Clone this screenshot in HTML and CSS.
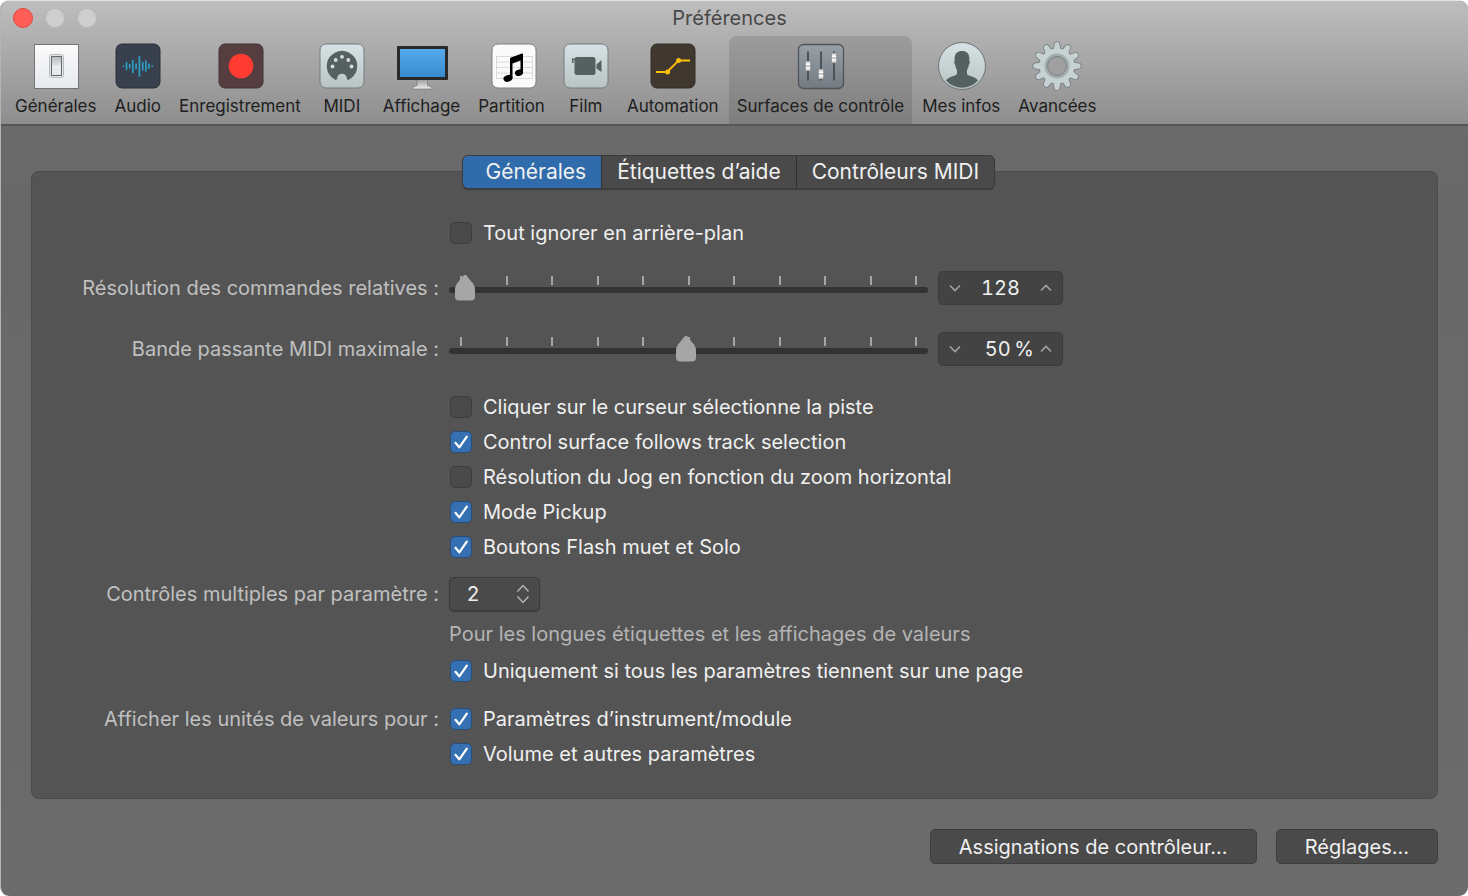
FILE: index.html
```html
<!DOCTYPE html>
<html lang="fr">
<head>
  <meta charset="UTF-8" />
  <meta name="viewport" content="width=device-width, initial-scale=1" />
  <title>Préférences</title>
  <link rel="stylesheet" href="styles.css">
</head>
<body>
  <div class="window">
    <header class="titlebar">
      <div class="title-row">
        <div class="lights">
          <button type="button" class="light close" aria-label="Fermer"></button>
          <button type="button" class="light" aria-label="Réduire" disabled></button>
          <button type="button" class="light" aria-label="Agrandir" disabled></button>
        </div>
        <h1>Préférences</h1>
      </div>

      <nav class="toolbar" aria-label="Catégories">
        <button type="button" class="tool">
          <svg width="50" height="50" viewBox="0 0 50 50" aria-hidden="true">
            <defs>
              <linearGradient id="white" x1="0" y1="0" x2="0" y2="1"><stop offset="0" stop-color="#fbfbfc"/><stop offset="1" stop-color="#e6e9ee"/></linearGradient>
              <linearGradient id="rocker" x1="0" y1="0" x2="0" y2="1"><stop offset="0" stop-color="#b9bcbf"/><stop offset=".45" stop-color="#dcdfe1"/><stop offset=".5" stop-color="#eceff1"/><stop offset="1" stop-color="#e2e8ea"/></linearGradient>
            </defs>
            <rect x="3.5" y="3.5" width="44" height="44" fill="url(#white)" stroke="#747474"/>
            <rect x="18.5" y="13.5" width="14" height="23" rx="2" fill="#e4e4e6" stroke="#bcbcbe"/>
            <rect x="20.5" y="15.5" width="10" height="19" fill="url(#rocker)" stroke="#666"/>
          </svg>
          <span>Générales</span>
        </button>
        <button type="button" class="tool">
          <svg width="50" height="50" viewBox="0 0 50 50" aria-hidden="true">
            <rect x="3" y="3" width="44" height="44" rx="6" fill="#37404c" stroke="#2b3038"/>
            <g stroke="#2f9fc4" stroke-width="1.7" stroke-linecap="round">
              <path d="M10.5 25v.2M13.5 21.5v7M16.700 23.500v3M19.800 19.500v12M23.100 23v4.500M26.400 15.500v19.500M29.700 21.500v7.500M32.900 20v10M36 23v4M39.200 25v.2"/>
            </g>
          </svg>
          <span>Audio</span>
        </button>
        <button type="button" class="tool">
          <svg width="50" height="50" viewBox="0 0 50 50" aria-hidden="true">
            <rect x="4" y="3" width="44" height="44" rx="6" fill="#563d40" stroke="#423436"/>
            <circle cx="26" cy="25" r="12.3" fill="#ff3b32"/>
          </svg>
          <span>Enregistrement</span>
        </button>
        <button type="button" class="tool">
          <svg width="50" height="50" viewBox="0 0 50 50" aria-hidden="true">
            <defs>
              <linearGradient id="pale" x1="0" y1="0" x2="0" y2="1"><stop offset="0" stop-color="#d6e2e4"/><stop offset="1" stop-color="#b9c3c4"/></linearGradient>
            </defs>
            <rect x="3" y="3" width="44" height="44" rx="6" fill="url(#pale)" stroke="#757b7c"/>
            <path d="M19 39.200A15.300 15.300 0 1 1 31 39.200L29.800 37.500A4.800 4.800 0 0 0 20.200 37.500Z" fill="#566060"/>
            <g fill="#d3dcdd"><circle cx="15.500" cy="25.500" r="1.900"/><circle cx="18.700" cy="19" r="1.900"/><circle cx="25" cy="15.800" r="1.900"/><circle cx="31.300" cy="19" r="1.900"/><circle cx="34.500" cy="25.500" r="1.900"/></g>
          </svg>
          <span>MIDI</span>
        </button>
        <button type="button" class="tool">
          <svg width="52" height="50" viewBox="0 0 52 50" aria-hidden="true">
            <defs>
              <linearGradient id="screen" x1="0" y1="0" x2="0" y2="1"><stop offset="0" stop-color="#56aaee"/><stop offset="1" stop-color="#358bcd"/></linearGradient>
              <linearGradient id="stand" x1="0" y1="0" x2="0" y2="1"><stop offset="0" stop-color="#999"/><stop offset="1" stop-color="#eee"/></linearGradient>
            </defs>
            <path d="M21 38h10.500v6.500l4.500 2V48H16.500v-1.500l4.500-2z" fill="url(#stand)" stroke="#777" stroke-width=".7"/>
            <rect x="1" y="5" width="51" height="34" rx="1" fill="#292929"/>
            <rect x="4" y="8" width="45" height="28" fill="url(#screen)"/>
          </svg>
          <span>Affichage</span>
        </button>
        <button type="button" class="tool">
          <svg width="50" height="50" viewBox="0 0 50 50" aria-hidden="true">
            <rect x="5" y="3" width="44" height="44" rx="6" fill="#fafafa" stroke="#808080"/>
            <path d="M9 15.500h37M9 21h37M9 26.500h37M9 32h37M9 37.500h37M9.500 15.500v22M45.500 15.500v22" stroke="#d2d2d4" stroke-width=".8"/>
            <path d="M23 18Q23 17 24 16.600L35 12.500Q36 12.200 36 13.200V31.500H33.500V19.500L25.500 22.500V37H23Z" fill="#000"/>
            <ellipse cx="21" cy="37.300" rx="4.600" ry="3.300" transform="rotate(-18 21 37.300)"/>
            <ellipse cx="32" cy="31.800" rx="4.200" ry="3.200" transform="rotate(-18 32 31.800)"/>
          </svg>
          <span>Partition</span>
        </button>
        <button type="button" class="tool">
          <svg width="50" height="50" viewBox="0 0 50 50" aria-hidden="true">
            <rect x="3" y="3" width="44" height="44" rx="6" fill="url(#pale)" stroke="#757b7c"/>
            <rect x="13.500" y="16" width="21" height="18" rx="2.500" fill="#566060"/>
            <path d="M14 18.200H11.700V22" stroke="#566060" stroke-width="1.600" fill="none"/>
            <path d="M35.500 23.500 40.500 19V31L35.500 27.500Z" fill="#566060"/>
          </svg>
          <span>Film</span>
        </button>
        <button type="button" class="tool">
          <svg width="50" height="50" viewBox="0 0 50 50" aria-hidden="true">
            <rect x="3" y="3" width="44" height="44" rx="6" fill="#40382f" stroke="#302c28"/>
            <g fill="#ffbf0d" stroke="#ffbf0d" stroke-width="1.8">
              <path d="M8 31H17.500M19.500 30.500 30.500 19.700M33 19.500H42" fill="none"/>
              <circle cx="19.600" cy="31" r="1.600"/><circle cx="30.600" cy="19.600" r="1.600"/>
            </g>
          </svg>
          <span>Automation</span>
        </button>
        <button type="button" class="tool selected" aria-current="page">
          <svg width="50" height="50" viewBox="0 0 50 50" aria-hidden="true">
            <defs>
              <linearGradient id="steel" x1="0" y1="0" x2="0" y2="1"><stop offset="0" stop-color="#98a1a7"/><stop offset="1" stop-color="#737a82"/></linearGradient>
              <linearGradient id="knob" x1="0" y1="0" x2="0" y2="1"><stop offset="0" stop-color="#bbb"/><stop offset=".35" stop-color="#fff"/><stop offset=".5" stop-color="#aaa"/><stop offset=".65" stop-color="#fff"/><stop offset="1" stop-color="#bbb"/></linearGradient>
            </defs>
            <rect x="3.500" y="3.500" width="45" height="44" rx="5" fill="url(#steel)" stroke="#50555b" stroke-width="1.300"/>
            <path d="M13 10.500v29M26 10.500v29M39 10.500v29" stroke="#484e53" stroke-width="1.800"/>
            <g fill="url(#knob)" stroke="#777" stroke-width=".4">
              <rect x="10.500" y="20" width="5" height="10" rx="1"/>
              <rect x="23.500" y="28" width="5" height="10" rx="1"/>
              <rect x="36.500" y="12" width="5" height="10" rx="1"/>
            </g>
          </svg>
          <span>Surfaces de contrôle</span>
        </button>
        <button type="button" class="tool">
          <svg width="50" height="50" viewBox="0 0 50 50" aria-hidden="true">
            <circle cx="26" cy="25" r="23.500" fill="url(#pale)" stroke="#6f7576"/>
            <path d="M10 39.500C12.500 36 18 35.500 21 33.300V29C20 27.500 19.500 26 19.300 24C18.200 23 17.900 20.500 18.700 19.500C18 13 21 10 26 10S34 13 33.300 19.500C34.100 20.500 33.800 23 32.700 24C32.500 26 32 27.500 31 29V33.300C34 35.500 39.500 36 42 39.500A21.500 21.500 0 0 1 10 39.500Z" fill="#556060"/>
          </svg>
          <span>Mes infos</span>
        </button>
        <button type="button" class="tool">
          <svg width="50" height="50" viewBox="0 0 50 50" aria-hidden="true">
            <defs>
              <path id="tooth" d="M21.500 9 22.800 2Q25 .2 27.200 2L28.500 9Z"/>
              <g id="gear">
                <circle cx="25" cy="25" r="17.500"/>
                <use href="#tooth"/><use href="#tooth" transform="rotate(30 25 25)"/><use href="#tooth" transform="rotate(60 25 25)"/><use href="#tooth" transform="rotate(90 25 25)"/>
                <use href="#tooth" transform="rotate(120 25 25)"/><use href="#tooth" transform="rotate(150 25 25)"/><use href="#tooth" transform="rotate(180 25 25)"/><use href="#tooth" transform="rotate(210 25 25)"/>
                <use href="#tooth" transform="rotate(240 25 25)"/><use href="#tooth" transform="rotate(270 25 25)"/><use href="#tooth" transform="rotate(300 25 25)"/><use href="#tooth" transform="rotate(330 25 25)"/>
              </g>
            </defs>
            <use href="#gear" fill="none" stroke="#777d7e" stroke-width="1.600"/>
            <use href="#gear" fill="#c6d1d3"/>
            <circle cx="25" cy="25" r="11" fill="#a0a0a0" stroke="#a3adaf" stroke-width="3"/>
            <circle cx="25" cy="25" r="9.500" fill="#a0a0a0" stroke="#7a8183"/>
          </svg>
          <span>Avancées</span>
        </button>
      </nav>
    </header>

    <main>
      <div class="tabs" role="tablist">
        <button type="button" class="tab active" role="tab" aria-selected="true">Générales</button>
        <button type="button" class="tab" role="tab" aria-selected="false">Étiquettes d’aide</button>
        <button type="button" class="tab" role="tab" aria-selected="false">Contrôleurs MIDI</button>
      </div>

      <form class="panel">
        <div class="row">
          <label class="check"><input type="checkbox"> Tout ignorer en arrière-plan</label>
        </div>

        <div class="sliders">
          <label for="resolution">Résolution des commandes relatives :</label>
          <div class="slider">
            <div class="ticks"><i></i><i></i><i></i><i></i><i></i><i></i><i></i><i></i><i></i><i></i><i></i></div>
            <input type="range" id="resolution" min="128" max="16384" value="128">
          </div>
          <div class="stepper">
            <button type="button" aria-label="Diminuer"><svg width="12" height="8" viewBox="0 0 12 8"><path d="M1 1.500 6 6.500 11 1.500"/></svg></button>
            <input type="text" value="128" aria-label="Résolution">
            <button type="button" aria-label="Augmenter"><svg width="12" height="8" viewBox="0 0 12 8"><path d="M1 6.500 6 1.500 11 6.500"/></svg></button>
          </div>

          <label for="bandwidth">Bande passante MIDI maximale :</label>
          <div class="slider">
            <div class="ticks"><i></i><i></i><i></i><i></i><i></i><i></i><i></i><i></i><i></i><i></i><i></i></div>
            <input type="range" id="bandwidth" min="0" max="100" value="50">
          </div>
          <div class="stepper percent">
            <button type="button" aria-label="Diminuer"><svg width="12" height="8" viewBox="0 0 12 8"><path d="M1 1.500 6 6.500 11 1.500"/></svg></button>
            <input type="text" value="50&#8201;%" aria-label="Bande passante">
            <button type="button" aria-label="Augmenter"><svg width="12" height="8" viewBox="0 0 12 8"><path d="M1 6.500 6 1.500 11 6.500"/></svg></button>
          </div>
        </div>

        <div class="row">
          <label class="check"><input type="checkbox"> Cliquer sur le curseur sélectionne la piste</label>
          <label class="check"><input type="checkbox" checked> Control surface follows track selection</label>
          <label class="check"><input type="checkbox"> Résolution du Jog en fonction du zoom horizontal</label>
          <label class="check"><input type="checkbox" checked> Mode Pickup</label>
          <label class="check"><input type="checkbox" checked> Boutons Flash muet et Solo</label>
        </div>

        <div class="row">
          <label class="row-label" for="multiple">Contrôles multiples par paramètre :</label>
          <select id="multiple">
            <option>1</option>
            <option selected>2</option>
            <option>3</option>
            <option>4</option>
          </select>
          <p class="hint">Pour les longues étiquettes et les affichages de valeurs</p>
          <label class="check"><input type="checkbox" checked> Uniquement si tous les paramètres tiennent sur une page</label>
        </div>

        <div class="row" role="group" aria-labelledby="units">
          <span class="row-label" id="units">Afficher les unités de valeurs pour :</span>
          <label class="check"><input type="checkbox" checked> Paramètres d’instrument/module</label>
          <label class="check"><input type="checkbox" checked> Volume et autres paramètres</label>
        </div>
      </form>

      <div class="actions">
        <button type="button">Assignations de contrôleur…</button>
        <button type="button">Réglages…</button>
      </div>
    </main>
  </div>
</body>
</html>
```
FILE: styles.css
```css
*, *::before, *::after { box-sizing: border-box; }
body {
  margin: 0;
  background: #fff;
  color: #f0f0f0;
  font-family: Inter, "Liberation Sans", sans-serif;
  font-size: 20px;
  line-height: 24px;
}
button, input, select {
  margin: 0;
  padding: 0;
  border: 0;
  font: inherit;
  color: inherit;
}
.window {
  min-height: 100vh;
  background: linear-gradient(#6e6e6e, #686868 200px, #6b6b6b);
  border-top: 1px solid #e4e4e4;
  border-left: 1px solid #b4b4b4;
  border-radius: 9px;
  overflow: hidden;
}

/* title bar */
.titlebar {
  height: 125px;
  background: linear-gradient(#bebebe, #8e8e8e);
  border-bottom: 2px solid #565656;
}
.title-row {
  position: relative;
  height: 35px;
}
.title-row h1 {
  margin: 0;
  padding-right: 10px;
  font-size: 20px;
  font-weight: 400;
  line-height: 35px;
  text-align: center;
  color: #484848;
}
.lights {
  position: absolute;
  top: 7px;
  left: 12px;
  display: flex;
  gap: 12px;
}
.light {
  width: 20px;
  height: 20px;
  border: 1px solid #bababa;
  border-radius: 50%;
  background: #cecece;
}
.light.close {
  background: #ff5f57;
  border-color: #e2463f;
}
.toolbar {
  display: flex;
  gap: 2px;
  height: 88px;
  padding-left: 6px;
}
.tool {
  display: flex;
  flex-direction: column;
  align-items: center;
  padding: 5px 8px 0;
  background: none;
  color: #1e1e1e;
  font-size: 17px;
  line-height: 30px;
  white-space: nowrap;
}
.tool svg { margin: 0 -2px; }
.tool.selected {
  background: linear-gradient(#9c9c9c, #7e7e7e);
  border-radius: 8px 8px 0 0;
}

/* tabs */
main { padding: 29px 30px 32px; }
.tabs {
  position: relative;
  display: flex;
  width: max-content;
  margin: 0 0 -18px calc(50% - 273px);
  border: 1px solid #3b3b3b;
  border-radius: 6px;
  background: #4a4a4a;
  box-shadow: 0 1px 1px #3c3c3c;
  overflow: hidden;
}
.tab {
  height: 32px;
  padding: 0 15px;
  background: none;
  font-size: 21px;
}
.tab + .tab { border-left: 1px solid #303030; }
.tab.active {
  padding: 0 15px 0 23px;
  background: #306cab;
}

/* settings */
.panel {
  padding: 43px 0 27px;
  background: #545454;
  border: 1px solid #4b4b4b;
  border-radius: 8px;
  color: #c0c0c0;
}
.row, .sliders {
  display: grid;
  grid-template-columns: 407px auto;
  column-gap: 10px;
  align-items: center;
  justify-content: start;
}
.row > * {
  grid-column: 2;
  justify-self: start;
}
.row + .row { margin-top: 13px; }
.row > .row-label {
  grid-column: 1;
  justify-self: end;
}
.check {
  display: flex;
  align-items: center;
  gap: 11px;
  height: 35px;
  color: #f0f0f0;
}
.check input {
  appearance: none;
  width: 22px;
  height: 22px;
  margin-left: 1px;
  border: 1px solid #3e3e3e;
  border-radius: 5px;
  background: #4a4a4a;
}
.check input:checked {
  border-color: #294e78;
  background: #3470b2 url("data:image/svg+xml,%3Csvg xmlns='http://www.w3.org/2000/svg' viewBox='0 0 20 20'%3E%3Cpath d='M4.500 10.800 8.300 15.400 15.800 4.600' fill='none' stroke='white' stroke-width='2.200' stroke-linecap='round' stroke-linejoin='round'/%3E%3C/svg%3E") center / 20px;
}

/* sliders */
.sliders {
  grid-template-columns: 407px 479px 125px;
  grid-auto-rows: 61px;
  margin: 7px 0 10px;
}
.sliders > label { justify-self: end; }
.slider {
  position: relative;
  height: 26px;
  padding: 0 10px 0 5px;
}
.slider::before {
  content: "";
  position: absolute;
  top: 12px;
  left: 0;
  right: 0;
  height: 6px;
  border-radius: 3px;
  background: #333;
}
.ticks {
  position: absolute;
  top: 1px;
  left: 11px;
  right: 11px;
  display: flex;
  justify-content: space-between;
}
.ticks i {
  width: 2px;
  height: 9px;
  background: #a6a6a6;
}
.slider input {
  position: relative;
  display: block;
  appearance: none;
  width: 100%;
  height: 26px;
  background: none;
}
.slider input::-webkit-slider-thumb {
  appearance: none;
  width: 22px;
  height: 26px;
  background: #a6a6a6;
  clip-path: path("M11 0Q12 0 14 3L19 9Q21 12 21 15V22Q21 26 17 26H5Q1 26 1 22V15Q1 12 3 9L8 3Q10 0 11 0Z");
}
.stepper {
  display: flex;
  align-items: center;
  height: 34px;
  padding: 0 9px;
  border: 1px solid #3b3b3b;
  border-radius: 5px;
  background: #434343;
}
.stepper button {
  display: flex;
  padding: 4px 1px;
  background: none;
}
.stepper svg {
  fill: none;
  stroke: #a3a3a3;
  stroke-width: 1.6;
}
.stepper input {
  flex: 1;
  min-width: 0;
  background: none;
  color: #f0f0f0;
  text-align: center;
  font-variant-numeric: tabular-nums;
}
.stepper.percent input {
  padding-right: 5px;
  text-align: right;
}

select {
  appearance: none;
  width: 91px;
  height: 34px;
  padding-left: 17px;
  border: 1px solid #3b3b3b;
  border-radius: 5px;
  background: #4a4a4a url("data:image/svg+xml,%3Csvg xmlns='http://www.w3.org/2000/svg' viewBox='0 0 14 20'%3E%3Cpath d='M1.500 7.500 7 1.500 12.500 7.500M1.500 12.500 7 18.500 12.500 12.500' fill='none' stroke='%23b0b0b0' stroke-width='1.500'/%3E%3C/svg%3E") right 9px center / 14px 20px no-repeat;
  box-shadow: 0 1px 1px #3c3c3c;
}
.panel select { color: #f0f0f0; }
.hint {
  margin: 11px 0 7px;
  color: #b4b4b4;
}

/* bottom buttons */
.actions {
  display: flex;
  justify-content: flex-end;
  gap: 19px;
  margin-top: 30px;
}
.actions button {
  height: 35px;
  padding: 0 28px;
  border: 1px solid #3e3e3e;
  border-radius: 5px;
  background: #4a4a4a;
}
```
